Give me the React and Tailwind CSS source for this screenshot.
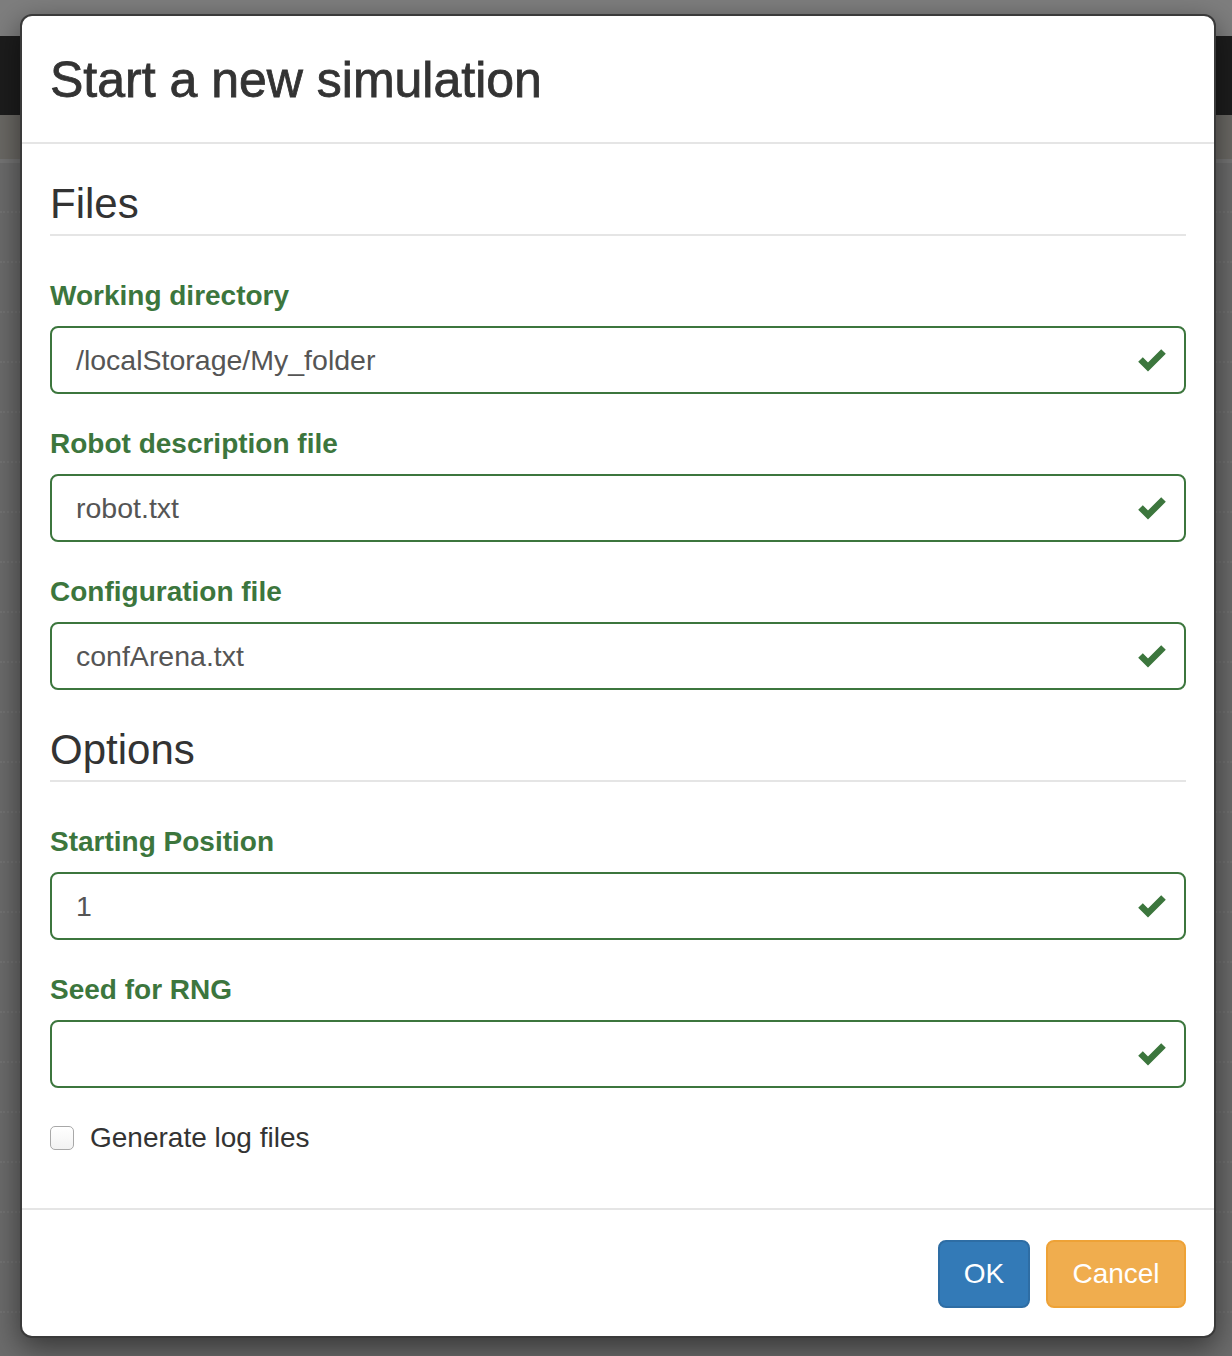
const fields = [
  { label: 'Working directory', value: '/localStorage/My_folder' },
  { label: 'Robot description file', value: 'robot.txt' },
  { label: 'Configuration file', value: 'confArena.txt' },
];

const options = [
  { label: 'Starting Position', value: '1' },
  { label: 'Seed for RNG', value: '' },
];

const OkIcon = () => (
  <svg width="28" height="24" viewBox="0 0 28 24" className="shrink-0">
    <path d="M2.5 11.5 L10 19 L25.5 3.5" fill="none" stroke="#3c763d" strokeWidth="6.5" strokeLinejoin="miter" />
  </svg>
);

const Field = ({ label, value }) => (
  <div className="mb-[30px]">
    <div className="h-10 mb-[10px] text-[28px] leading-10 font-bold text-[#3c763d]">{label}</div>
    <div className="h-[68px] flex items-center border-2 border-[#3c763d] rounded-[8px] pl-[24px] pr-[18px]">
      <span className="flex-1 text-[28.5px] text-[#555]">{value}</span>
      <OkIcon />
    </div>
  </div>
);

const Legend = ({ children }) => (
  <div className="h-[62px] mb-10 border-b-2 border-[#e5e5e5] text-[42px] leading-[60px] text-[#333]">{children}</div>
);

const App = () => {
  return (
    <div className="relative h-[1356px] w-[1232px] overflow-hidden bg-[#6c6c6c]" style={{ fontFamily: '"Liberation Sans", Arial, sans-serif' }}>
      {/* page behind the backdrop */}
      <div className="h-9 bg-[#7e7e7e]" />
      <div className="h-[79px] bg-[#1d1d1d]" />
      <div className="h-[48px] bg-[#6b6965] border-b-4 border-[#757575]" />
      {Array.from({ length: 24 }).map((_, i) => (
        <div key={i} className="h-[50px] border-b-2 border-dotted border-[#737373]" />
      ))}

      {/* modal */}
      <div className="absolute left-5 top-[14px] w-[1196px] h-[1324px] bg-white border-2 border-[#3a3a3a] rounded-[12px] shadow-[0_10px_30px_rgba(0,0,0,0.5)] flex flex-col">
        <div className="px-[28px] pt-[31px] pb-[29px] border-b-2 border-[#e5e5e5]">
          <h4 className="text-[50px] leading-[66px] text-[#333] [-webkit-text-stroke:0.8px_#333]">Start a new simulation</h4>
        </div>
        <div className="px-[28px] pt-[30px] pb-[30px]">
          <Legend>Files</Legend>
          {fields.map(f => <Field key={f.label} {...f} />)}
          <Legend>Options</Legend>
          {options.map(f => <Field key={f.label} {...f} />)}
          <div className="h-10 mb-5 flex items-center gap-4 text-[28px] text-[#333]">
            <div className="w-6 h-6 rounded-[5px] border border-[#a8a8a8] bg-gradient-to-b from-white to-[#f2f2f2]" />
            <span>Generate log files</span>
          </div>
        </div>
        <div className="border-t-2 border-[#e5e5e5] px-[28px] pt-[30px] flex justify-end gap-4">
          <button className="h-[68px] w-[92px] rounded-[8px] border-2 border-[#2e6da4] bg-[#337ab7] text-white text-[28px]">OK</button>
          <button className="h-[68px] w-[140px] rounded-[8px] border-2 border-[#eea236] bg-[#f0ad4e] text-white text-[28px]">Cancel</button>
        </div>
      </div>
    </div>
  );
};

export default App;
